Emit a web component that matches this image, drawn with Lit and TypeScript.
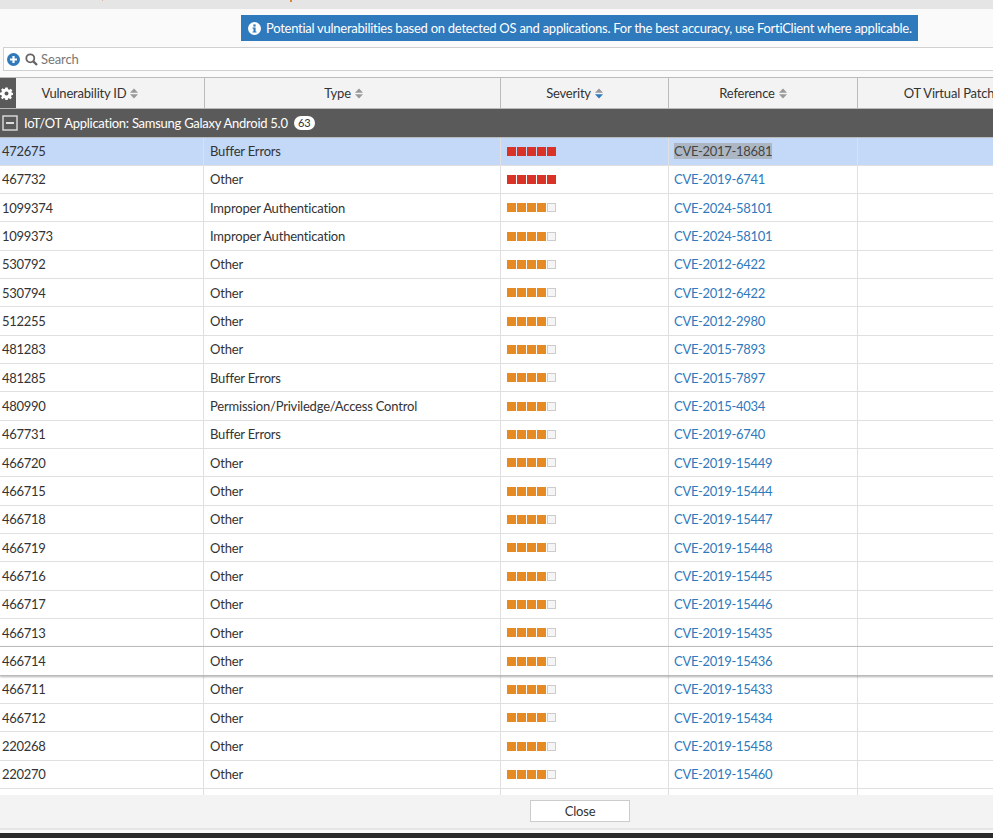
import {LitElement, html, css} from 'lit';
import {customElement} from 'lit/decorators.js';

type Row = [string, string, number, string];

const rows: Row[] = [
  ['472675', 'Buffer Errors', 5, 'CVE-2017-18681'],
  ['467732', 'Other', 5, 'CVE-2019-6741'],
  ['1099374', 'Improper Authentication', 4, 'CVE-2024-58101'],
  ['1099373', 'Improper Authentication', 4, 'CVE-2024-58101'],
  ['530792', 'Other', 4, 'CVE-2012-6422'],
  ['530794', 'Other', 4, 'CVE-2012-6422'],
  ['512255', 'Other', 4, 'CVE-2012-2980'],
  ['481283', 'Other', 4, 'CVE-2015-7893'],
  ['481285', 'Buffer Errors', 4, 'CVE-2015-7897'],
  ['480990', 'Permission/Priviledge/Access Control', 4, 'CVE-2015-4034'],
  ['467731', 'Buffer Errors', 4, 'CVE-2019-6740'],
  ['466720', 'Other', 4, 'CVE-2019-15449'],
  ['466715', 'Other', 4, 'CVE-2019-15444'],
  ['466718', 'Other', 4, 'CVE-2019-15447'],
  ['466719', 'Other', 4, 'CVE-2019-15448'],
  ['466716', 'Other', 4, 'CVE-2019-15445'],
  ['466717', 'Other', 4, 'CVE-2019-15446'],
  ['466713', 'Other', 4, 'CVE-2019-15435'],
  ['466714', 'Other', 4, 'CVE-2019-15436'],
  ['466711', 'Other', 4, 'CVE-2019-15433'],
  ['466712', 'Other', 4, 'CVE-2019-15434'],
  ['220268', 'Other', 4, 'CVE-2019-15458'],
  ['220270', 'Other', 4, 'CVE-2019-15460'],
  ['', '', 0, ''],
];

const sortIcon = (active = false) => html`
  <svg class="sort" width="8" height="11" viewBox="0 0 8 11">
    <path d="M4 0.5 L8 4.8 H0 Z" fill="#999"></path>
    <path d="M4 10.5 L8 6.2 H0 Z" fill=${active ? '#2f79bd' : '#999'}></path>
  </svg>`;

@customElement('app-root')
export class AppRoot extends LitElement {
  static styles = css`
    :host {
      display: flex;
      flex-direction: column;
      width: 993px;
      height: 838px;
      overflow: hidden;
      background: #fafafa;
      font-family: Lato, "Liberation Sans", sans-serif;
      font-size: 13px;
      color: #333;
    }
    .topbar {
      display: flex;
      align-items: flex-start;
      height: 9px;
      flex: none;
      background: #e5e5e5;
    }
    .speck-a { width: 1px; height: 1px; margin-left: 102px; background: #e8b0a0; }
    .speck-b { width: 2px; height: 2px; margin-left: 187px; background: #d8873a; }
    .notice-wrap {
      flex: none;
      height: 38px;
      padding-top: 6px;
      padding-left: 241px;
      box-sizing: border-box;
    }
    .notice {
      display: flex;
      align-items: center;
      gap: 5px;
      width: 677px;
      height: 26px;
      box-sizing: border-box;
      padding-left: 7px;
      background: #2f79bd;
      color: #fff;
      white-space: nowrap;
      letter-spacing: -0.26px;
    }
    .search {
      flex: none;
      display: flex;
      align-items: center;
      height: 24px;
      margin-left: 3px;
      box-sizing: border-box;
      background: #fff;
      border: 1px solid #d0d0d0;
      border-right: none;
      padding-left: 3px;
      color: #777;
      letter-spacing: -0.1px;
    }
    .search svg { margin-right: 5px; }
    .search svg + svg { margin-right: 3px; }
    .grid {
      flex: none;
      margin-top: 6px;
      height: 718px;
      overflow: hidden;
      background: #fff;
    }
    .head, .row {
      display: grid;
      width: 1071px;
    }
    .head {
      grid-template-columns: 205px 296px 168px 189px 213px;
      height: 32px;
      box-sizing: border-box;
      background: #f3f3f3;
      border-top: 1px solid #bbb;
      border-bottom: 1px solid #bbb;
      letter-spacing: -0.2px;
    }
    .row { grid-template-columns: 204px 297px 168px 189px 213px; }
    .hcell {
      display: flex;
      align-items: center;
      justify-content: center;
      gap: 4px;
      padding-right: 18px;
      box-sizing: border-box;
      border-right: 1px solid #bbb;
      position: relative;
      white-space: nowrap;
    }
    .hcell.first { padding-right: 24px; }
    .hcell.shift { padding-right: 20px; }
    .gear {
      position: absolute;
      left: 0;
      top: 0;
      bottom: 0;
      width: 16px;
      background: #5a5a5a;
      display: flex;
      align-items: center;
    }
    .group {
      height: 28.5px;
      box-sizing: border-box;
      background: #5a5a5a;
      border-bottom: 1px solid #bbb;
      color: #fff;
      display: flex;
      align-items: center;
      padding-left: 2px;
      letter-spacing: -0.26px;
    }
    .group svg { margin-right: 6px; }
    .count {
      margin-left: 6px;
      height: 14px;
      min-width: 21px;
      border-radius: 7px;
      background: #fff;
      color: #333;
      font-size: 11px;
      line-height: 14px;
      text-align: center;
    }
    .row {
      height: 28.33px;
      box-sizing: border-box;
      border-bottom: 1px solid #e0e0e0;
    }
    .row.selected { background: #c4d9f8; }
    .row.hover { border-top: 1px solid #bbb; margin-top: -1px; height: 29.33px; }
    .row.under {
      border-bottom-color: #bbb;
      box-shadow: 0 1px 2px rgba(0, 0, 0, 0.3);
      position: relative;
    }
    .cell {
      display: flex;
      align-items: center;
      box-sizing: border-box;
      padding-left: 2px;
      border-right: 1px solid #e0e0e0;
      min-width: 0;
      letter-spacing: -0.3px;
    }
    .cell.type { padding-left: 6px; letter-spacing: -0.19px; }
    .cell.ref { padding-left: 5px; }
    .cell.sev { padding-left: 6px; gap: 1px; }
    .sq {
      width: 9px;
      height: 9px;
      box-sizing: border-box;
    }
    .sq.crit { background: #d93328; }
    .sq.high { background: #e68a24; }
    .sq.none { background: #f5f5f5; border: 1px solid #ccc; }
    a { color: #2f79bd; text-decoration: none; }
    .sel-text { background: #adb7c4; color: #444; }
    .footer {
      flex: none;
      height: 33px;
      background: #f3f3f3;
      display: flex;
      padding: 5px 0 0 530px;
      box-sizing: border-box;
    }
    .close {
      width: 100px;
      height: 22px;
      box-sizing: border-box;
      padding: 0;
      background: #fff;
      border: 1px solid #ccc;
      color: #333;
      font: inherit;
      letter-spacing: -0.2px;
    }
    .edge {
      flex: none;
      height: 5px;
      box-sizing: border-box;
      background: #fafafa;
      border-top: 2px solid #e6e6e6;
    }
    .dark { flex: 1; background: #2a2a2a; }
  `;

  renderRow(r: Row, i: number) {
    const [id, type, level, ref] = r;
    const cls = ['row', i === 0 ? 'selected' : '', i === 18 ? 'hover under' : ''].join(' ');
    const fill = level === 5 ? 'crit' : 'high';
    return html`<div class=${cls}>
      <div class="cell">${id}</div>
      <div class="cell type">${type}</div>
      <div class="cell sev">
        ${level ? [0, 1, 2, 3, 4].map(n => html`<span class="sq ${n < level ? fill : 'none'}"></span>`) : ''}
      </div>
      <div class="cell ref">
        ${i === 0 ? html`<span class="sel-text">${ref}</span>` : html`<a href="#">${ref}</a>`}
      </div>
      <div class="cell"></div>
    </div>`;
  }

  render() {
    return html`
      <div class="topbar"><span class="speck-a"></span><span class="speck-b"></span></div>
      <div class="notice-wrap">
        <div class="notice">
          <svg width="13" height="13" viewBox="0 0 13 13">
            <circle cx="6.5" cy="6.5" r="6.5" fill="#fff"></circle>
            <rect x="5.4" y="2.4" width="2.2" height="2.2" fill="#2f79bd"></rect>
            <path d="M4.6 5.5 H7.6 V9.4 H8.5 V10.6 H4.6 V9.4 H5.5 V6.7 H4.6 Z" fill="#2f79bd"></path>
          </svg>
          <span>Potential vulnerabilities based on detected OS and applications. For the best accuracy, use FortiClient where applicable.</span>
        </div>
      </div>
      <div class="search">
        <svg width="13" height="13" viewBox="0 0 13 13">
          <circle cx="6.5" cy="6.5" r="6.5" fill="#2f79bd"></circle>
          <path d="M5.4 3 H7.6 V5.4 H10 V7.6 H7.6 V10 H5.4 V7.6 H3 V5.4 H5.4 Z" fill="#fff"></path>
        </svg>
        <svg width="13" height="13" viewBox="0 0 13 13" fill="none" stroke="#666">
          <circle cx="5.3" cy="5.3" r="4" stroke-width="1.8"></circle>
          <path d="M8.3 8.3 L12 12" stroke-width="2.4"></path>
        </svg>
        <span>Search</span>
      </div>
      <div class="grid">
        <div class="head">
          <div class="hcell first">
            <div class="gear">
              <svg width="13" height="13" viewBox="0 0 13 13">
                <path fill="#fff" fill-rule="evenodd" d="M5.3 0.5 H7.7 L8 2.2 L9.3 2.8 L10.8 1.8 L12.4 3.6 L11.3 5 L11.7 5.6 L13 6 V7.8 L11.5 8.2 L11 9.4 L11.9 10.8 L10.4 12.2 L9 11.2 L8 11.6 L7.6 13 H5.4 L5 11.6 L3.9 11.1 L2.5 12.2 L1 10.7 L2 9.3 L1.5 8.2 L0 7.8 V5.7 L1.5 5.3 L2 4.1 L1.1 2.7 L2.6 1.3 L4 2.2 L5 1.8 Z M6.5 4.6 A2 2 0 1 0 6.5 8.6 A2 2 0 1 0 6.5 4.6 Z"></path>
              </svg>
            </div>
            <span>Vulnerability ID</span>${sortIcon()}
          </div>
          <div class="hcell"><span>Type</span>${sortIcon()}</div>
          <div class="hcell shift"><span>Severity</span>${sortIcon(true)}</div>
          <div class="hcell shift"><span>Reference</span>${sortIcon()}</div>
          <div class="hcell"><span>OT Virtual Patch</span>${sortIcon()}</div>
        </div>
        <div class="group">
          <svg width="16" height="16" viewBox="0 0 16 16" fill="none">
            <rect x="1" y="1" width="14" height="14" stroke="#ddd" stroke-width="1.4"></rect>
            <rect x="4" y="7" width="8" height="2" fill="#ddd"></rect>
          </svg>
          <span>IoT/OT Application: Samsung Galaxy Android 5.0</span>
          <span class="count">63</span>
        </div>
        ${rows.map((r, i) => this.renderRow(r, i))}
      </div>
      <div class="footer"><button class="close">Close</button></div>
      <div class="edge"></div>
      <div class="dark"></div>
    `;
  }
}
